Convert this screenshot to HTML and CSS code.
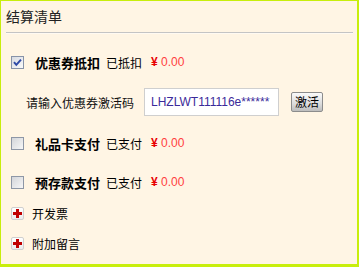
FILE: index.html
```html
<!DOCTYPE html>
<html>
<head>
<meta charset="utf-8">
<link rel="stylesheet" href="styles.css">
</head>
<body>
<div class="frame">
  <div class="panel">
    <div class="title">结算清单</div>
    <div class="row pay r1">
      <svg class="cb" width="13" height="13" viewBox="0 0 13 13">
        <defs><linearGradient id="g1" x1="0" y1="0" x2="1" y2="1"><stop offset="0" stop-color="#d6d9e0"/><stop offset="1" stop-color="#fbfbfb"/></linearGradient></defs>
        <rect x="0.5" y="0.5" width="12" height="12" fill="url(#g1)" stroke="#8793a8"/>
        <path d="M3 6.2 L5.3 8.8 L10 3.6" fill="none" stroke="#2f4aa6" stroke-width="2"/>
      </svg>
      <span class="name">优惠券抵扣</span>
      <span class="state">已抵扣</span>
      <span class="money"><b>¥</b> 0.00</span>
    </div>
    <div class="row code">
      <span class="label">请输入优惠券激活码</span>
      <div class="input">LHZLWT111116e******</div>
      <button class="btn">激活</button>
    </div>
    <div class="row pay r3">
      <svg class="cb" width="13" height="13" viewBox="0 0 13 13">
        <defs><linearGradient id="g2" x1="0" y1="0" x2="1" y2="1"><stop offset="0" stop-color="#d2d4d8"/><stop offset="1" stop-color="#f8f8f8"/></linearGradient></defs>
        <rect x="0.5" y="0.5" width="12" height="12" fill="url(#g2)" stroke="#8e97a6"/>
      </svg>
      <span class="name">礼品卡支付</span>
      <span class="state">已支付</span>
      <span class="money"><b>¥</b> 0.00</span>
    </div>
    <div class="row pay r4">
      <svg class="cb" width="13" height="13" viewBox="0 0 13 13">
        <rect x="0.5" y="0.5" width="12" height="12" fill="url(#g2)" stroke="#8e97a6"/>
      </svg>
      <span class="name">预存款支付</span>
      <span class="state">已支付</span>
      <span class="money"><b>¥</b> 0.00</span>
    </div>
    <div class="row ext r5">
      <span class="plus"></span>
      <span class="ext-text">开发票</span>
    </div>
    <div class="row ext r6">
      <span class="plus"></span>
      <span class="ext-text">附加留言</span>
    </div>
  </div>
</div>
</body>
</html>
```

FILE: styles.css
```css
html, body {
  margin: 0;
  padding: 0;
  background: #ffffff;
}
.frame {
  width: 359px;
  height: 267px;
  box-sizing: border-box;
  border-top: 1px solid #c8ee0c;
  border-left: 1px solid #c8ee0c;
  border-right: 2px solid #c8ee0c;
  border-bottom: 3px solid #c8ee0c;
  background: #fff5e4;
  font-family: "Noto Sans CJK SC", "Liberation Sans", sans-serif;
  font-size: 12px;
  color: #111;
  overflow: hidden;
}
.panel {
  padding: 0 4px 0 5px;
  display: flex;
  flex-direction: column;
}
.title {
  height: 31px;
  line-height: 30px;
  font-size: 14px;
  color: #222;
  border-bottom: 1px solid #c4c4c4;
  box-shadow: 0 1px 0 #fffaf2;
}
.row {
  display: flex;
  align-items: center;
  height: 24px;
  padding-left: 5px;
}
.r1 { margin-top: 17px; }
.code { margin-top: 14px; height: 28px; padding-left: 20px; }
.r3 { margin-top: 15px; }
.r4 { margin-top: 15px; }
.r5 { margin-top: 7px; }
.r6 { margin-top: 6px; }
.cb {
  flex: none;
  display: block;
}
.name {
  margin-left: 11px;
  font-weight: bold;
  font-size: 13px;
  color: #000;
}
.state {
  margin-left: 6px;
  color: #000;
}
.money {
  margin-left: 9px;
  color: #ff4040;
  font-family: "Liberation Sans", sans-serif;
  font-size: 12px;
}
.money b {
  color: #e80000;
  font-weight: bold;
}
.label {
  color: #111;
}
.input {
  margin-left: 10px;
  width: 135px;
  height: 28px;
  box-sizing: border-box;
  border: 1px solid #cfcfcf;
  background: #ffffff;
  font-family: "Liberation Sans", Arial, sans-serif;
  font-size: 12px;
  color: #3a2a9a;
  line-height: 26px;
  padding-left: 6px;
  overflow: hidden;
  white-space: nowrap;
}
.btn {
  margin-left: 12px;
  width: 32px;
  height: 20px;
  padding: 0;
  box-sizing: border-box;
  border: 1px solid #8c8c8c;
  border-radius: 2px;
  background: linear-gradient(#fafafa, #dcdcdc 60%, #bdbdbd);
  font-family: "Noto Sans CJK SC", sans-serif;
  font-size: 12px;
  line-height: 18px;
  color: #000;
}
.plus {
  flex: none;
  position: relative;
  width: 13px;
  height: 13px;
  box-sizing: border-box;
  border: 1px solid #cfcfcf;
  border-radius: 2px;
  background: linear-gradient(#ffffff, #ebebeb);
}
.plus::before, .plus::after {
  content: "";
  position: absolute;
  background: #c00000;
}
.plus::before {
  left: 1px;
  top: 4px;
  width: 9px;
  height: 3px;
}
.plus::after {
  left: 4px;
  top: 1px;
  width: 3px;
  height: 9px;
}
.ext-text {
  margin-left: 8px;
  font-size: 12px;
  color: #000;
}
```
